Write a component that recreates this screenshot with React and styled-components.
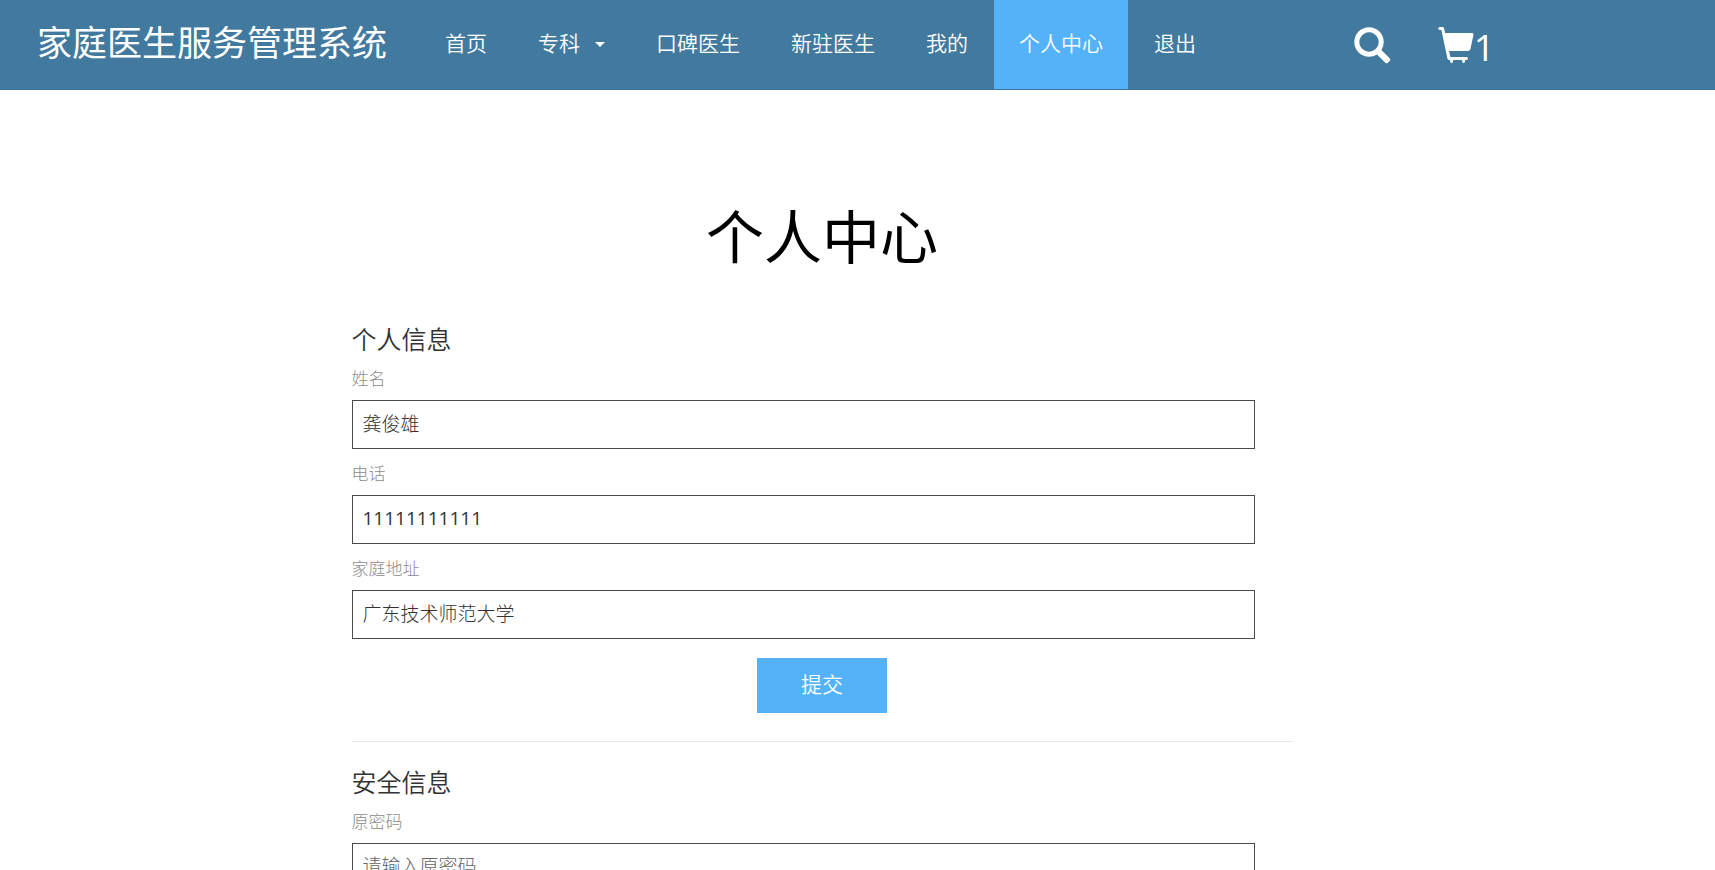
import React, { useState } from "react";
import styled, { createGlobalStyle } from "styled-components";

const GlobalStyle = createGlobalStyle`
  * {
    box-sizing: border-box;
  }

  body {
    margin: 0;
    background: #fff;
    color: #333;
    font-family: "Open Sans", "Noto Sans CJK SC", sans-serif;
    font-size: 19px;
    font-weight: 400;
  }
`;

const Header = styled.header`
  display: flex;
  align-items: stretch;
  min-height: 90px;
  padding: 0 220px 0 37px;
  background: #427a9f;
  border-bottom: 1px solid #3c7399;
`;

const Brand = styled.a`
  display: flex;
  align-items: center;
  padding-bottom: 4px;
  margin-right: 33px;
  color: #fff;
  font-size: 35px;
  line-height: 40px;
  text-decoration: none;
  white-space: nowrap;
`;

const Nav = styled.nav`
  display: flex;
`;

const NavList = styled.ul`
  display: flex;
  gap: 1px;
  margin: 0;
  padding: 0;
  list-style: none;
`;

const NavLink = styled.a`
  display: flex;
  align-items: center;
  gap: 15px;
  height: 100%;
  padding: 0 25px 4px;
  background: ${(props) => (props.$active ? "#54b2f9" : "transparent")};
  color: #fff;
  font-size: 21px;
  font-weight: 350;
  line-height: 28px;
  text-decoration: none;
  white-space: nowrap;

  &:hover {
    background: #54b2f9;
  }
`;

const Caret = styled.span`
  margin-top: 4px;
  border-top: 5px solid #fff;
  border-left: 5px solid transparent;
  border-right: 5px solid transparent;
`;

const Tools = styled.div`
  display: flex;
  align-items: center;
  gap: 48px;
  margin-left: auto;
`;

const SearchButton = styled.button`
  display: flex;
  padding: 0;
  border: none;
  background: none;
  color: #fff;
  cursor: pointer;
`;

const CartLink = styled.a`
  display: flex;
  align-items: center;
  color: #fff;
  font-size: 37px;
  line-height: 44px;
  text-decoration: none;
`;

const CartCount = styled.span`
  padding-top: 4px;
`;

const Icon = styled.svg`
  width: 36px;
  height: 36px;
  fill: currentColor;
`;

const Main = styled.main`
  max-width: 1170px;
  margin: 0 auto;
  padding: 115px 150px 60px 79px;
`;

const PageTitle = styled.h1`
  margin: 0 0 56px;
  color: #000;
  font-size: 58px;
  font-weight: 400;
  line-height: 64px;
  text-align: center;
`;

const Form = styled.form`
  & + & {
    margin-top: 28px;
    padding-top: 26px;
    border-top: 1px solid #e9e9e9;
  }
`;

const FormTitle = styled.h2`
  margin: 0 0 14px;
  font-size: 25px;
  font-weight: 350;
  line-height: 28px;
`;

const Field = styled.div`
  margin-bottom: 13px;
`;

const Label = styled.label`
  display: block;
  margin-bottom: 9px;
  color: #8c8c8c;
  font-size: 17px;
  font-weight: 300;
  line-height: 24px;
`;

const Input = styled.input`
  display: block;
  width: 96%;
  height: 49px;
  padding: 0 10px 3px;
  border: 1px solid #4a4a4a;
  border-radius: 0;
  background: #fff;
  color: #333;
  font: inherit;
  font-weight: ${(props) => (props.type === "tel" ? 400 : 300)};

  &::placeholder {
    color: #666;
    opacity: 1;
  }
`;

const SubmitButton = styled.button`
  display: block;
  height: 55px;
  margin: 19px auto 0;
  padding: 0 44px 5px;
  border: none;
  background: #54b2f9;
  color: #fff;
  font: inherit;
  font-size: 21px;
  font-weight: 350;
  cursor: pointer;
`;

const navItems = [
  { id: "home", label: "首页" },
  { id: "specialty", label: "专科", dropdown: true },
  { id: "praised", label: "口碑医生" },
  { id: "new", label: "新驻医生" },
  { id: "mine", label: "我的" },
  { id: "center", label: "个人中心" },
  { id: "logout", label: "退出" },
];

const SearchIcon = () => (
  <Icon viewBox="0 0 1200 1200" overflow="visible" aria-hidden="true">
    <path
      transform="matrix(1 0 0 -1 0 1200)"
      d="M500 1191q100 0 191 -39t156.5 -104.5t104.5 -156.5t39 -191l-1 -2l1 -5q0 -141 -78 -262l275 -274q23 -26 22.5 -44.5t-22.5 -42.5l-59 -58q-26 -20 -46.5 -20t-39.5 20l-275 274q-119 -77 -261 -77l-5 1l-2 -1q-100 0 -191 39t-156.5 104.5t-104.5 156.5t-39 191t39 191t104.5 156.5t156.5 104.5t191 39zM500 1022q-88 0 -162 -43t-117 -117t-43 -162t43 -162t117 -117t162 -43t162 43t117 117t43 162t-43 162t-117 117t-162 43z"
    />
  </Icon>
);

const CartIcon = () => (
  <Icon viewBox="0 0 1200 1200" overflow="visible" aria-hidden="true">
    <path
      transform="matrix(1 0 0 -1 0 1200)"
      d="M56 1200h94q17 0 31 -11t18 -27l38 -162h896q24 0 39 -18.5t10 -42.5l-100 -475q-5 -21 -27 -42.5t-55 -21.5h-633l48 -200h535q21 0 35 -14.5t14 -34.5q0 -21 -14 -35.5t-35 -14.5h-48v-50q0 -21 -15 -35t-35 -14.5t-34.5 14.5t-14.5 35v50h-300v-50q0 -21 -14.5 -35t-34.5 -14.5q-21 0 -35.5 14.5t-14.5 35v50h-31q-18 0 -32.5 10t-20.5 19l-5 10l-201 961h-54q-20 0 -35 14.5t-15 35.5t15 35t35 14z"
    />
  </Icon>
);

const App = () => {
  const [activeItem, setActiveItem] = useState("center");
  const [profile, setProfile] = useState({
    name: "龚俊雄",
    phone: "11111111111",
    address: "广东技术师范大学",
  });

  const handleChange = (e) => {
    setProfile({ ...profile, [e.target.name]: e.target.value });
  };

  return (
    <>
      <GlobalStyle />
      <Header>
        <Brand href="#home">家庭医生服务管理系统</Brand>
        <Nav>
          <NavList>
            {navItems.map((item) => (
              <li key={item.id}>
                <NavLink
                  href={`#${item.id}`}
                  $active={activeItem === item.id}
                  onClick={() => setActiveItem(item.id)}
                >
                  {item.label}
                  {item.dropdown && <Caret />}
                </NavLink>
              </li>
            ))}
          </NavList>
        </Nav>
        <Tools>
          <SearchButton type="button" aria-label="搜索">
            <SearchIcon />
          </SearchButton>
          <CartLink href="#cart">
            <CartIcon />
            <CartCount>1</CartCount>
          </CartLink>
        </Tools>
      </Header>

      <Main>
        <PageTitle>个人中心</PageTitle>

        <Form onSubmit={(e) => e.preventDefault()}>
          <FormTitle>个人信息</FormTitle>
          <Field>
            <Label htmlFor="name">姓名</Label>
            <Input
              id="name"
              name="name"
              type="text"
              value={profile.name}
              onChange={handleChange}
            />
          </Field>
          <Field>
            <Label htmlFor="phone">电话</Label>
            <Input
              id="phone"
              name="phone"
              type="tel"
              value={profile.phone}
              onChange={handleChange}
            />
          </Field>
          <Field>
            <Label htmlFor="address">家庭地址</Label>
            <Input
              id="address"
              name="address"
              type="text"
              value={profile.address}
              onChange={handleChange}
            />
          </Field>
          <SubmitButton type="submit">提交</SubmitButton>
        </Form>

        <Form onSubmit={(e) => e.preventDefault()}>
          <FormTitle>安全信息</FormTitle>
          <Field>
            <Label htmlFor="old-password">原密码</Label>
            <Input
              id="old-password"
              type="password"
              placeholder="请输入原密码"
            />
          </Field>
        </Form>
      </Main>
    </>
  );
};

export default App;
